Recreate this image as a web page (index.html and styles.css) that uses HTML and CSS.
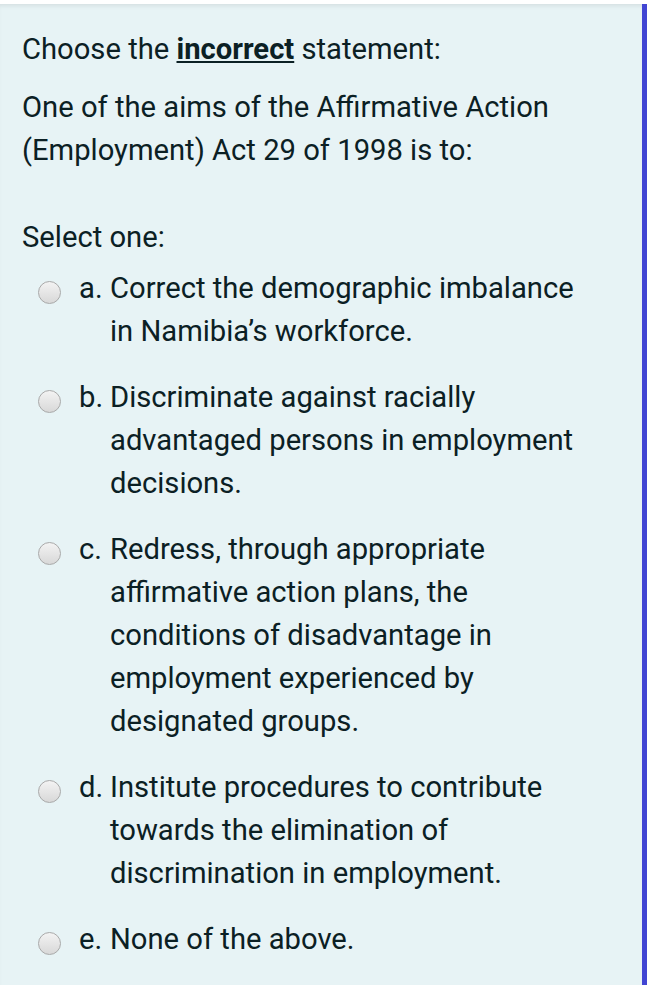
FILE: index.html
```html
<!DOCTYPE html>
<html>
<head>
<meta charset="utf-8">
<link rel="stylesheet" href="styles.css">
</head>
<body>
<div class="card">
  <div class="qtext">
    <p class="lead">Choose the <strong><u>incorrect</u></strong> statement:</p>
    <p class="question">One of the aims of the Affirmative Action (Employment) Act 29 of 1998 is to:</p>
  </div>
  <div class="prompt">Select one:</div>
  <div class="answers">
    <div class="opt"><span class="radio"></span><span class="letter">a.</span><span class="txt">Correct the demographic imbalance in Namibia’s workforce.</span></div>
    <div class="opt"><span class="radio"></span><span class="letter">b.</span><span class="txt">Discriminate against racially advantaged persons in employment decisions.</span></div>
    <div class="opt"><span class="radio"></span><span class="letter">c.</span><span class="txt">Redress, through appropriate affirmative action plans, the conditions of disadvantage in employment experienced by designated groups.</span></div>
    <div class="opt"><span class="radio"></span><span class="letter">d.</span><span class="txt">Institute procedures to contribute towards the elimination of discrimination in employment.</span></div>
    <div class="opt"><span class="radio"></span><span class="letter">e.</span><span class="txt">None of the above.</span></div>
  </div>
</div>
</body>
</html>
```

FILE: styles.css
```css
html, body {
  margin: 0;
  padding: 0;
  background: #ffffff;
}
body {
  padding-top: 4px;
  font-family: Roboto, "Liberation Sans", sans-serif;
  color: #0b2024;
  font-size: 29.2px;
  line-height: 43px;
}
.card {
  background: #e7f3f5;
  border-right: 5px solid #4145d3;
  box-shadow: inset 0 4px 4px -2px rgba(0,0,0,0.08);
  height: 981px;
  box-sizing: border-box;
  padding: 24px 0 0 22px;
}
.qtext p {
  margin: 0;
}
.lead {
  margin-bottom: 15px !important;
}
.question {
  width: 580px;
}
strong {
  font-weight: 700;
}
.prompt {
  margin-top: 44px;
}
.answers {
  margin-top: 8px;
}
.opt {
  display: flex;
  align-items: flex-start;
  margin-bottom: 23px;
}
.radio {
  flex: none;
  width: 21px;
  height: 21px;
  border-radius: 50%;
  border: 1px solid #a9a9a9;
  background: linear-gradient(#f3f3f3, #d8d8d8);
  margin: 14px 0 0 16px;
}
.letter {
  flex: none;
  width: 31px;
  margin-left: 18px;
}
.txt {
  width: 480px;
}
```
